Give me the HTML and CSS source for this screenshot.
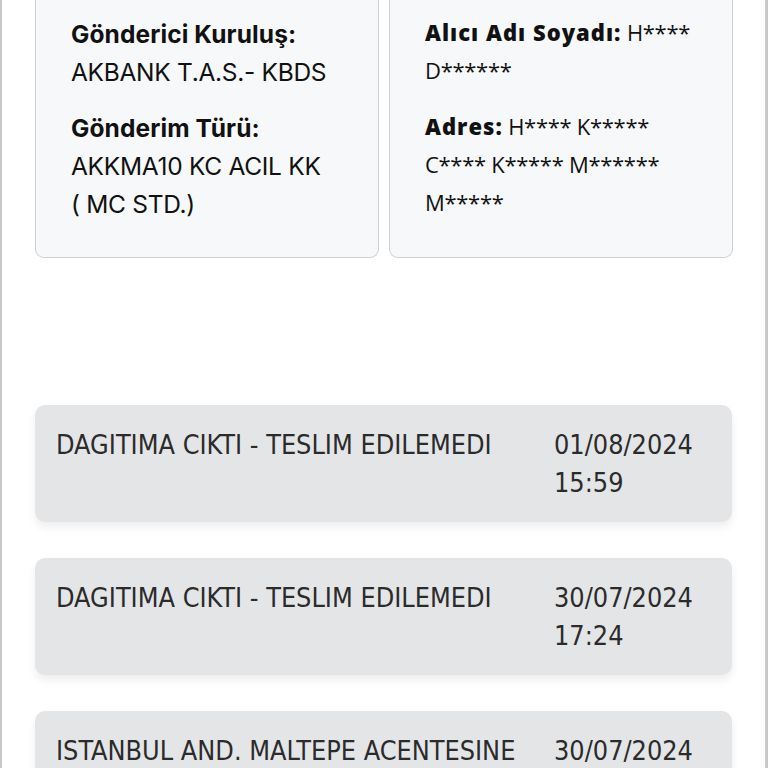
FILE: index.html
```html
<!DOCTYPE html>
<html lang="tr">
<head>
<meta charset="utf-8">
<link rel="stylesheet" href="styles.css">
</head>
<body>
<div class="frame">
  <section class="info">
    <div class="card card-left">
      <div class="group">
        <div class="label">Gönderici Kuruluş:</div>
        <div class="value">AKBANK T.A.S.- KBDS</div>
      </div>
      <div class="group">
        <div class="label">Gönderim Türü:</div>
        <div class="value">AKKMA10 KC ACIL KK<br>( MC STD.)</div>
      </div>
    </div>
    <div class="card card-right">
      <div class="group">
        <span class="label">Alıcı Adı Soyadı:</span> H****<br>D******
      </div>
      <div class="group">
        <span class="label">Adres:</span> H**** K*****<br>C**** K***** M******<br>M*****
      </div>
    </div>
  </section>

  <section class="events">
    <div class="event">
      <div class="desc">DAGITIMA CIKTI - TESLIM EDILEMEDI</div>
      <div class="date">01/08/2024<br>15:59</div>
    </div>
    <div class="event">
      <div class="desc">DAGITIMA CIKTI - TESLIM EDILEMEDI</div>
      <div class="date">30/07/2024<br>17:24</div>
    </div>
    <div class="event">
      <div class="desc">ISTANBUL AND. MALTEPE ACENTESINE</div>
      <div class="date">30/07/2024<br>14:10</div>
    </div>
  </section>
</div>
</body>
</html>
```

FILE: styles.css
```css
html, body {
  margin: 0;
  padding: 0;
  background: #ffffff;
  overflow: hidden;
}

.frame {
  width: 768px;
  height: 768px;
  box-sizing: border-box;
  border-left: 2px solid #c9c9c9;
  border-right: 3px solid #c9c9c9;
  padding: 0 33px 0 33px;
  overflow: hidden;
}

.info {
  display: grid;
  grid-template-columns: 344px 344px;
  column-gap: 10px;
}

.card {
  background: #f7f8fa;
  border: 1.5px solid #cfd0d2;
  border-top: none;
  border-radius: 0 0 9px 9px;
  padding: 15px 16px 34px 35px;
  color: #111;
}

.card-left {
  font-family: "Inter", "Liberation Sans", sans-serif;
  font-size: 24.5px;
  line-height: 38px;
  letter-spacing: -0.3px;
}

.card-left .label {
  letter-spacing: 0.1px;
}

.card-right {
  font-family: "Open Sans", "Liberation Sans", sans-serif;
  font-size: 22px;
  line-height: 38px;
  padding-top: 13px;
  white-space: nowrap;
  letter-spacing: -0.3px;
}

.card-right .label {
  letter-spacing: 1px;
  font-weight: 800;
}

.group + .group {
  margin-top: 18px;
}

.label {
  font-weight: 700;
}

.events {
  margin-top: 147px;
  display: flex;
  flex-direction: column;
  gap: 36px;
}

.event {
  background: #e4e5e7;
  border-radius: 10px;
  box-shadow: 0 5px 8px rgba(0, 0, 0, 0.07);
  padding: 21px 20px 20px 21px;
  display: grid;
  grid-template-columns: 498px 1fr;
  font-family: "Liberation Sans Narrow", "DejaVu Sans Condensed", "Roboto Condensed", "Roboto", sans-serif;
  font-stretch: condensed;
  font-size: 26.8px;
  line-height: 38px;
  color: #2b2b2b;
}
```
